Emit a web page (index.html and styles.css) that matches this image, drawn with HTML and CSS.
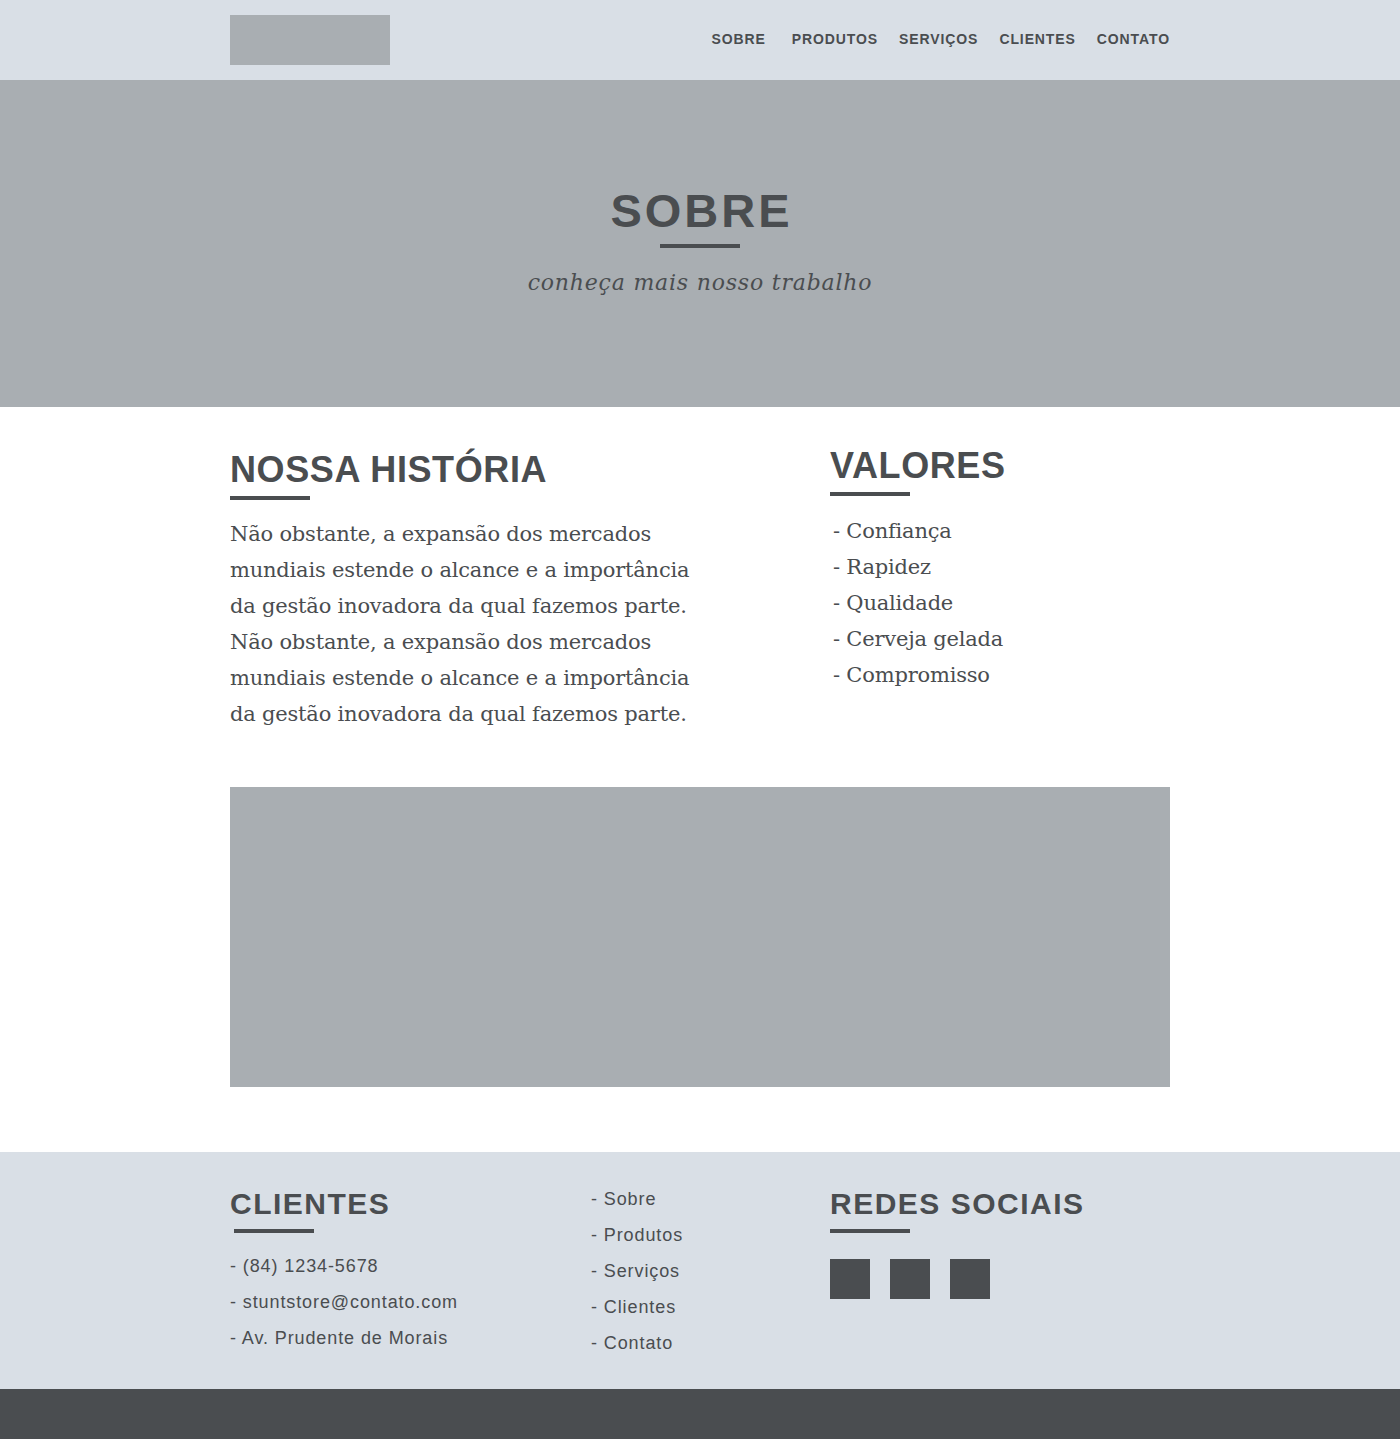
FILE: index.html
```html
<!DOCTYPE html>
<html lang="pt">
<head>
<meta charset="utf-8">
<link rel="stylesheet" href="styles.css">
</head>
<body>
<header class="topbar">
  <div class="wrap topbar-inner">
    <div class="logo"></div>
    <nav class="nav">
      <a>SOBRE</a>
      <a>PRODUTOS</a>
      <a>SERVIÇOS</a>
      <a>CLIENTES</a>
      <a>CONTATO</a>
    </nav>
  </div>
</header>
<section class="hero">
  <h1 class="hero-title">SOBRE</h1>
  <div class="hero-rule"></div>
  <p class="hero-sub">conheça mais nosso trabalho</p>
</section>
<main class="wrap content">
  <div class="cols">
    <div class="col-left">
      <h2 class="sec-title">NOSSA HISTÓRIA</h2>
      <div class="rule"></div>
      <p class="text">Não obstante, a expansão dos mercados mundiais estende o alcance e a importância da gestão inovadora da qual fazemos parte. Não obstante, a expansão dos mercados mundiais estende o alcance e a importância da gestão inovadora da qual fazemos parte.</p>
    </div>
    <div class="col-right">
      <h2 class="sec-title valores">VALORES</h2>
      <div class="rule"></div>
      <ul class="values">
        <li>- Confiança</li>
        <li>- Rapidez</li>
        <li>- Qualidade</li>
        <li>- Cerveja gelada</li>
        <li>- Compromisso</li>
      </ul>
    </div>
  </div>
  <div class="banner"></div>
</main>
<footer class="footer">
  <div class="wrap footer-inner">
    <div class="f-col f-contact">
      <h3 class="f-title">CLIENTES</h3>
      <div class="f-rule shifted"></div>
      <ul class="f-list">
        <li>- (84) 1234-5678</li>
        <li>- stuntstore@contato.com</li>
        <li>- Av. Prudente de Morais</li>
      </ul>
    </div>
    <div class="f-col f-links">
      <ul class="f-list">
        <li>- Sobre</li>
        <li>- Produtos</li>
        <li>- Serviços</li>
        <li>- Clientes</li>
        <li>- Contato</li>
      </ul>
    </div>
    <div class="f-col f-social">
      <h3 class="f-title">REDES SOCIAIS</h3>
      <div class="f-rule"></div>
      <div class="squares">
        <span class="sq"></span><span class="sq"></span><span class="sq"></span>
      </div>
    </div>
  </div>
</footer>
<div class="bottombar"></div>
</body>
</html>
```

FILE: styles.css
```css
* { box-sizing: border-box; }
body {
  margin: 0;
  background: #ffffff;
  color: #4a4d50;
  font-family: "Liberation Sans", Arial, sans-serif;
}
.wrap { width: 940px; margin: 0 auto; }

.topbar { background: #d9dfe6; height: 80px; }
.topbar-inner {
  height: 80px;
  display: flex;
  align-items: center;
  justify-content: space-between;
}
.logo { width: 160px; height: 50px; background: #a9aeb2; margin-top: -1px; }
.nav { display: flex; gap: 21px; margin-top: -3px; }
.nav a {
  font-size: 14px;
  font-weight: bold;
  letter-spacing: 0.9px;
  color: #4a4d50;
}
.nav a:first-child { margin-right: 5px; }

.hero {
  background: #a9aeb2;
  height: 327px;
  display: flex;
  flex-direction: column;
  align-items: center;
  padding-top: 103px;
}
.hero-title {
  margin: 0;
  font-size: 47px;
  line-height: 56px;
  letter-spacing: 3px;
  font-weight: bold;
  color: #4a4d50;
  padding-left: 3px;
}
.hero-rule { width: 80px; height: 4px; background: #4a4d50; margin-top: 5px; }
.hero-sub {
  margin: 22px 0 0;
  font-family: "DejaVu Serif", Georgia, serif;
  font-style: italic;
  font-size: 22px;
  letter-spacing: 0.8px;
  color: #4a4d50;
}

.content { padding-top: 42px; padding-bottom: 65px; }
.cols { display: flex; }
.col-left { width: 600px; }
.col-right { width: 340px; }
.sec-title {
  margin: 0;
  font-size: 36px;
  line-height: 42px;
  font-weight: bold;
  letter-spacing: 0.6px;
  color: #4a4d50;
}
.sec-title.valores { margin-top: -4px; }
.rule { width: 80px; height: 4px; background: #4a4d50; margin-top: 5px; }
.text {
  margin: 16px 0 0;
  width: 470px;
  font-family: "DejaVu Serif", Georgia, serif;
  font-size: 21px;
  letter-spacing: -0.2px;
  line-height: 36px;
  color: #4a4d50;
}
.values {
  list-style: none;
  margin: 17px 0 0;
  padding: 0 0 0 3px;
  font-family: "DejaVu Serif", Georgia, serif;
  font-size: 21px;
  letter-spacing: -0.2px;
  line-height: 36px;
}
.banner { width: 940px; height: 300px; background: #a9aeb2; margin-top: 55px; }

.footer { background: #d9dfe6; height: 237px; }
.footer-inner { display: flex; padding-top: 34px; }
.f-contact { width: 361px; }
.f-links { width: 239px; margin-top: -5px; }
.f-title {
  margin: 0;
  font-size: 30px;
  line-height: 36px;
  font-weight: bold;
  letter-spacing: 1.5px;
  color: #4a4d50;
}
.f-rule { width: 80px; height: 4px; background: #4a4d50; margin-top: 7px; }
.f-rule.shifted { margin-left: 4px; }
.f-list {
  list-style: none;
  margin: 0;
  padding: 0;
  font-size: 18px;
  line-height: 36px;
  letter-spacing: 0.9px;
}
.f-contact .f-list { margin-top: 15px; }
.squares { display: flex; gap: 20px; margin-top: 26px; }
.sq { width: 40px; height: 40px; background: #4a4d50; }

.bottombar { background: #4a4d50; height: 50px; }
```
